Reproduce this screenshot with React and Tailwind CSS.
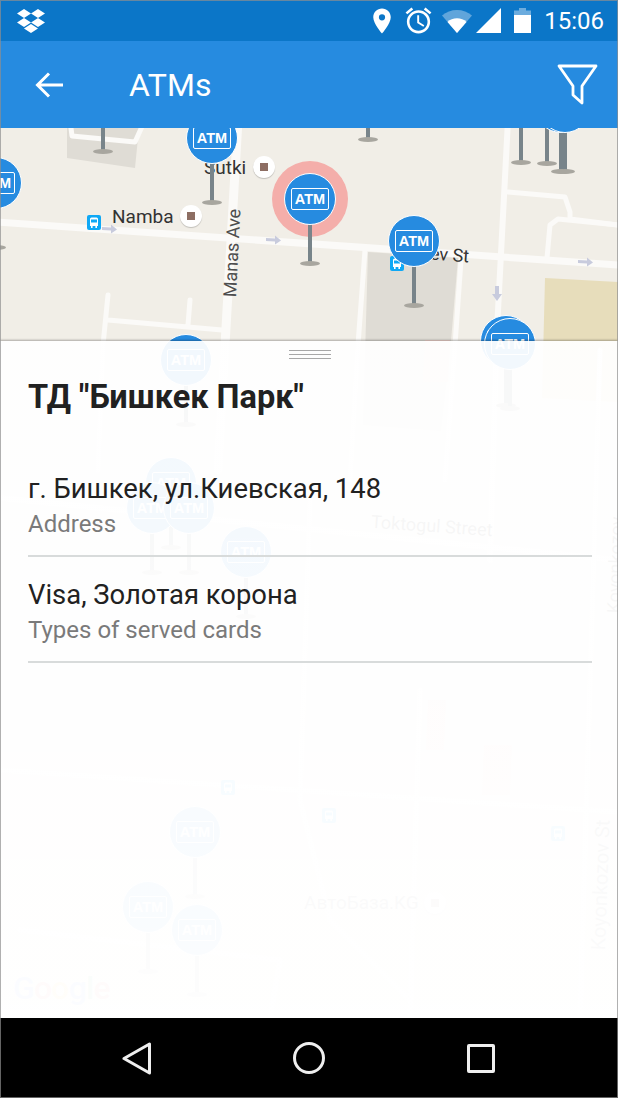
import { FaDropbox } from 'react-icons/fa';
import { MdLocationOn, MdAccessAlarm } from 'react-icons/md';

const roboto = "font-['Roboto',sans-serif]";

const pins = [
  { id: 1, pos: 'left-[77px] top-[-67px]' },
  { id: 2, pos: 'left-[342px] top-[-79px]' },
  { id: 3, pos: 'left-[495px] top-[-56px]' },
  { id: 4, pos: 'left-[521px] top-[-55px]' },
  { id: 5, pos: 'left-[535px] top-[-47px]' },
  { id: 6, pos: 'left-[539px] top-[-47px]' },
  { id: 7, pos: 'left-[-30px] top-[29px]' },
  { id: 8, pos: 'left-[186px] top-[-16px]' },
  { id: 9, pos: 'left-[284px] top-[45px]', selected: true },
  { id: 10, pos: 'left-[388px] top-[87px]' },
  { id: 11, pos: 'left-[160px] top-[206px]' },
  { id: 12, pos: 'left-[480px] top-[187px]' },
  { id: 13, pos: 'left-[484px] top-[190px]' },
  { id: 14, pos: 'left-[145px] top-[329px]' },
  { id: 15, pos: 'left-[126px] top-[354px]' },
  { id: 16, pos: 'left-[163px] top-[354px]' },
  { id: 17, pos: 'left-[220px] top-[398px]' },
  { id: 18, pos: 'left-[169px] top-[678px]' },
  { id: 19, pos: 'left-[122px] top-[753px]' },
  { id: 20, pos: 'left-[171px] top-[776px]' },
];

const Pin = ({ pos, selected }) => (
  <div className={`absolute flex h-[96px] w-[52px] flex-col items-center ${pos}`}>
    {selected && <div className="absolute left-[-12px] top-[-12px] h-[76px] w-[76px] rounded-full bg-[#f4aeaa]" />}
    <div className="absolute left-[24px] top-[50px] h-[40px] w-[4px] bg-[#78848a]" />
    <div className="absolute left-[16px] top-[88px] h-[5px] w-[20px] rounded-[50%] bg-[#a8a69f]" />
    <div className="relative flex h-[52px] w-[52px] items-center justify-center rounded-full border-[1.5px] border-white bg-[#268be0]">
      <div className="flex h-[22px] w-[38px] items-center justify-center rounded-[2px] border border-white font-['Liberation_Sans',sans-serif] text-[14.5px] font-bold leading-none text-white">
        ATM
      </div>
    </div>
  </div>
);

const BusIcon = ({ pos }) => (
  <div className={`absolute flex h-[15px] w-[14px] items-center justify-center rounded-[2px] bg-[#0fa8f5] ${pos}`}>
    <svg width="10" height="12" viewBox="0 0 10 12">
      <path d="M1 2a1.5 1.5 0 0 1 1.5-1.5h5A1.5 1.5 0 0 1 9 2v7H1z" fill="#fff" />
      <rect x="2" y="2.5" width="6" height="3" fill="#0fa8f5" />
      <rect x="2" y="9" width="1.6" height="2" fill="#fff" />
      <rect x="6.4" y="9" width="1.6" height="2" fill="#fff" />
    </svg>
  </div>
);

const PoiDot = ({ pos }) => (
  <div className={`absolute flex h-[22px] w-[22px] items-center justify-center rounded-full bg-white shadow-[0_1px_1px_rgba(0,0,0,0.2)] ${pos}`}>
    <div className="h-[8px] w-[8px] bg-[#8d6e63]" />
  </div>
);

// the map itself, coordinates are page coordinates
const MapRoads = () => (
  <svg className="absolute inset-0 h-full w-full" viewBox="0 128 618 890">
    <rect x="0" y="128" width="618" height="890" fill="#f1eee7" />
    <path d="M67 128h72l-4 40-68-10z" fill="#dfdcd5" />
    <path d="M368 252l90 6-7 83 -10 90-78-6z" fill="#dfdcd5" />
    <path d="M545 278l73 4v120l-76-4z" fill="#e7ddbb" />
    <path d="M425 340h25l-2 42h-25z" fill="#f3d6cf" />
    <path d="M428 700h18l-2 50h-18zM484 745h28l-2 50h-28z" fill="#f2c4c0" />
    <g fill="none" stroke="#fbfaf8" strokeLinecap="round" strokeLinejoin="round">
      <path strokeWidth="7" d="M-5 222L618 265" />
      <path strokeWidth="9" d="M238 120L225 345 218 470" />
      <path strokeWidth="6" d="M508 120L497 330 490 560" />
      <path strokeWidth="5" d="M508 192L565 197 570 212V219L618 225" />
      <path strokeWidth="5" d="M618 225L558 219 550 225 547 258" />
      <path strokeWidth="5" d="M365 250L358 345 350 480" />
      <path strokeWidth="5" d="M461 260L455 345 445 480" />
      <path strokeWidth="5" d="M70 120L72 136 135 142 145 120" />
      <path strokeWidth="5" d="M108 295L103 345 98 470M190 300L188 325M108 320L222 330" />
      <path strokeWidth="6" d="M0 498L618 560" />
      <path strokeWidth="5" d="M310 500L300 800 330 920 410 1000M600 350L580 1018" />
      <path strokeWidth="5" d="M0 770L618 812" />
      <path strokeWidth="5" d="M20 930L280 960 270 1018M420 690L410 1018" />
    </g>
    <g fill="#c8cbdd">
      <path d="M102 227l9 .6v-3l6 5-6 4v-3l-9-.6z" />
      <path d="M266 238l9 .6v-3l6 5-6 4v-3l-9-.6z" />
      <path d="M578 260l9 .6v-3l6 5-6 4v-3l-9-.6z" />
      <path d="M495 286h4v8h3l-5 7-5-7h3z" />
    </g>
  </svg>
);

const InfoRow = ({ value, label }) => (
  <div className="mb-[21px] flex h-[85px] flex-col border-b-2 border-[#d8dbdb]">
    <span className="text-[27.4px] leading-[34px] text-[#212121]">{value}</span>
    <span className="mt-[1px] text-[24px] leading-[34px] text-[#7a7a7a]">{label}</span>
  </div>
);

const App = () => {
  return (
    <div className={`relative flex h-[1098px] w-[618px] flex-col overflow-hidden ${roboto}`}>
      {/* status bar */}
      <div className="flex h-[41px] shrink-0 items-center justify-between bg-[#0b76c8] pl-[17px] pr-[14px] text-white">
        <FaDropbox size={28} />
        <div className="flex items-center">
          <MdLocationOn size={30} className="mr-[3px]" />
          <MdAccessAlarm size={31} className="ml-[3px] mr-[7px]" />
          <svg width="32" height="24" viewBox="0 0 32 24" className="mr-[3px]">
            <path d="M1 6.5C9 -1 23 -1 31 6.5L16 24z" fill="#fff" fillOpacity="0.35" />
            <path d="M6.500 13C11 8 21 8 25.500 13L16 24z" fill="#fff" />
          </svg>
          <svg width="25" height="25" viewBox="0 0 25 25" className="mr-[13px]">
            <path d="M25 0V25H0z" fill="#fff" />
          </svg>
          <svg width="17" height="25" viewBox="0 0 17 25" className="mr-[13px]">
            <path d="M5 0h7v2.500h5V7H0V2.500h5z" fill="#fff" fillOpacity="0.4" />
            <rect y="7" width="17" height="18" fill="#fff" />
          </svg>
          <span className="text-[24px] leading-none">15:06</span>
        </div>
      </div>

      {/* app bar */}
      <div className="z-10 flex h-[87px] shrink-0 items-center bg-[#268be0] pl-[35px] pr-[20px] text-white">
        <svg width="28" height="26" viewBox="0 0 28 26" fill="none" stroke="#fff" strokeWidth="3">
          <path d="M14 1.500L2.500 13 14 24.500M2.500 13H28" />
        </svg>
        <span className="ml-[66px] text-[32px] leading-none">ATMs</span>
        <svg width="41" height="41" viewBox="0 0 41 41" fill="none" stroke="#fff" strokeWidth="2.800" strokeLinejoin="round" className="ml-auto">
          <path d="M2 2H39L25 22V39L16 31V22z" />
        </svg>
      </div>

      {/* map with the details sheet on top */}
      <div className="relative flex-1 overflow-hidden">
        <MapRoads />

        <span className="absolute left-[112px] top-[77px] text-[19px] leading-[24px] text-[#333]">Namba</span>
        <span className="absolute left-[204px] top-[28px] text-[19px] leading-[24px] text-[#333]">Sutki</span>
        <span className="absolute left-[188px] top-[114px] origin-center -rotate-[87deg] whitespace-nowrap text-[18px] leading-[22px] text-[#4d4d4d]">Manas Ave</span>
        <span className="absolute left-[430px] top-[115px] rotate-[4deg] text-[18px] leading-[24px] text-[#333]">ev St</span>
        <span className="absolute left-[371px] top-[386px] rotate-[4deg] whitespace-nowrap text-[18px] leading-[24px] text-[#444]">Toktogul Street</span>
        <span className="absolute left-[304px] top-[763px] whitespace-nowrap text-[19px] leading-[24px] text-[#444]">АвтоБаза.KG</span>
        <span className="absolute left-[535px] top-[745px] -rotate-[88deg] whitespace-nowrap text-[20px] leading-[24px] text-[#444]">Koyonkozov St</span>
        <span className="absolute left-[567px] top-[425px] -rotate-[88deg] whitespace-nowrap text-[18px] leading-[24px] text-[#444]">Koyonkozov</span>
        <span className="absolute left-[13px] top-[842px] text-[32px] font-medium leading-[36px] tracking-tight">
          <span className="text-[#4285f4]">G</span>
          <span className="text-[#ea4335]">o</span>
          <span className="text-[#fbbc05]">o</span>
          <span className="text-[#4285f4]">g</span>
          <span className="text-[#34a853]">l</span>
          <span className="text-[#ea4335]">e</span>
        </span>

        <PoiDot pos="left-[180px] top-[77px]" />
        <PoiDot pos="left-[253px] top-[28px]" />
        <PoiDot pos="left-[424px] top-[764px]" />
        <BusIcon pos="left-[87px] top-[87px]" />
        <BusIcon pos="left-[390px] top-[128px]" />
        <BusIcon pos="left-[221px] top-[652px]" />
        <BusIcon pos="left-[322px] top-[680px]" />
        <BusIcon pos="left-[551px] top-[698px]" />

        {pins.map((pin) => (
          <Pin key={pin.id} pos={pin.pos} selected={pin.selected} />
        ))}

        <div className="absolute inset-x-0 bottom-0 top-[213px] bg-gradient-to-b from-white/94 to-white/98 pl-[28px] pr-[26px] shadow-[0_-1px_2px_rgba(0,0,0,0.3)]">
          <div className="mx-auto mt-[9px] flex w-[42px] flex-col gap-[3px]">
            <div className="h-px bg-[#a8a8a8]" />
            <div className="h-px bg-[#a8a8a8]" />
            <div className="h-px bg-[#a8a8a8]" />
          </div>
          <h1 className="mt-[19px] text-[32.5px] font-bold leading-[38px] text-[#212121]">ТД "Бишкек Парк"</h1>
          <div className="mt-[56px] flex flex-col">
            <InfoRow value="г. Бишкек, ул.Киевская, 148" label="Address" />
            <InfoRow value="Visa, Золотая корона" label="Types of served cards" />
          </div>
        </div>
      </div>

      {/* nav bar */}
      <div className="z-10 flex h-[80px] shrink-0 items-center justify-center bg-black">
        <div className="flex w-[172px] justify-center">
          <svg width="30" height="33" viewBox="0 0 30 33" fill="none" stroke="#efefef" strokeWidth="3" strokeLinejoin="round">
            <path d="M27.500 2V31L2 16.500z" />
          </svg>
        </div>
        <div className="flex w-[172px] justify-center">
          <div className="h-[32px] w-[32px] rounded-full border-[3px] border-[#efefef]" />
        </div>
        <div className="flex w-[172px] justify-center">
          <div className="h-[29px] w-[28px] rounded-[2px] border-[3px] border-[#efefef]" />
        </div>
      </div>

      {/* thin frame of the screenshot */}
      <div className="pointer-events-none absolute inset-0 z-20 border border-[#8f8f8f]/70" />
    </div>
  );
};

export default App;
